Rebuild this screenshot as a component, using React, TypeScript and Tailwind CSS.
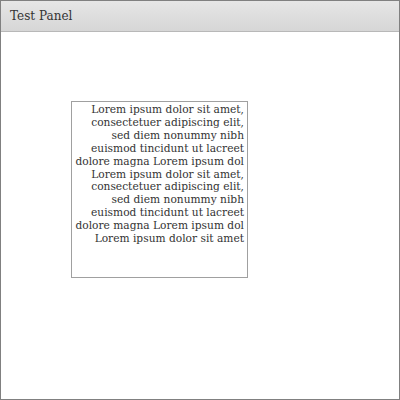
export default function App() {
  const lines = [
    "Lorem ipsum dolor sit amet,",
    "consectetuer adipiscing elit,",
    "sed diem nonummy nibh",
    "euismod tincidunt ut lacreet",
    "dolore magna Lorem ipsum dol",
    "Lorem ipsum dolor sit amet,",
    "consectetuer adipiscing elit,",
    "sed diem nonummy nibh",
    "euismod tincidunt ut lacreet",
    "dolore magna Lorem ipsum dol",
    "Lorem ipsum dolor sit amet",
  ];
  return (
    <div className="w-[400px] h-[400px] border border-[#808080] bg-white flex flex-col" style={{ fontFamily: '"DejaVu Serif", serif' }}>
      <div className="h-[31px] shrink-0 border-b border-[#b8b8b8] bg-gradient-to-b from-[#e6e6e6] to-[#d6d6d6] flex items-center pl-[9px] text-[12px] text-[#333]">
        Test Panel
      </div>
      <div className="pl-[70px] pt-[69px]">
        <div className="w-[177px] h-[177px] border border-[#a0a0a0] overflow-hidden text-right text-[10.65px] leading-[12.9px] text-[#333] pr-[3px] pt-[2px] flex flex-col">
          {lines.map((l, i) => (
            <div key={i} className="whitespace-nowrap">{l}</div>
          ))}
        </div>
      </div>
    </div>
  );
}
